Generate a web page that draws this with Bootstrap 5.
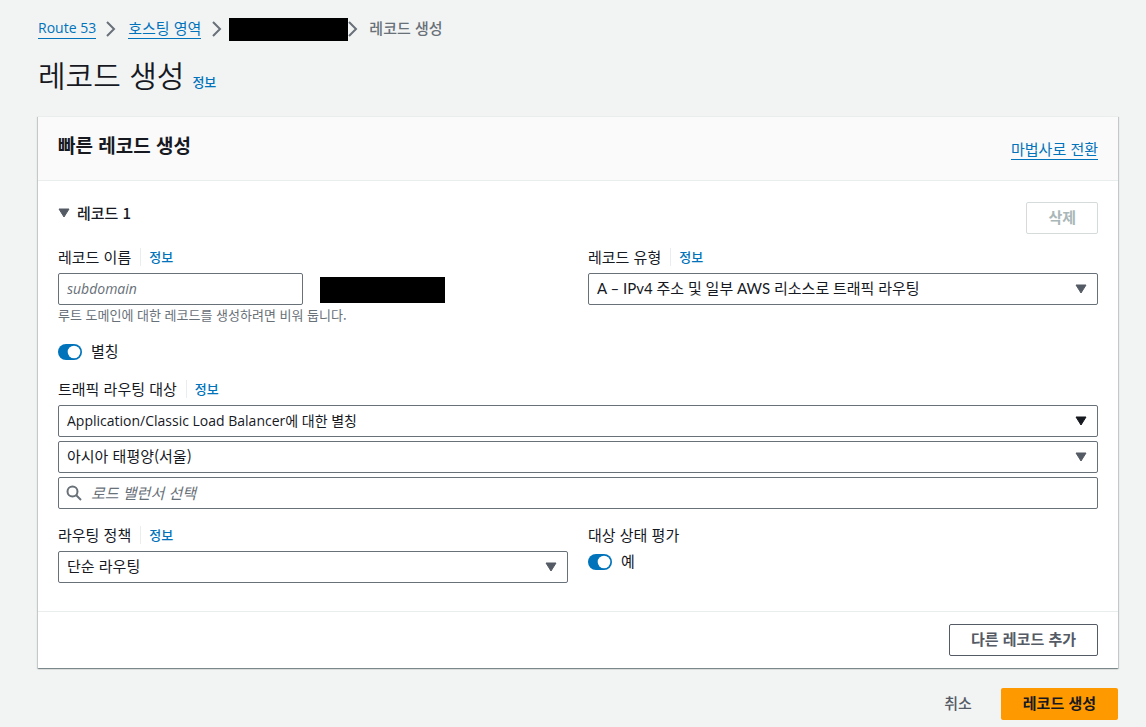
<!DOCTYPE html>
<html lang="ko">
<head>
<meta charset="utf-8">
<meta name="viewport" content="width=device-width, initial-scale=1">
<title>레코드 생성</title>
<link rel="stylesheet" href="https://cdn.jsdelivr.net/npm/bootstrap@5.3.0/dist/css/bootstrap.min.css">
<style>
  :root { --ink: #16191f; --slate: #545b64; --muted: #687078; --blue: #0073bb; --line: #eaeded; }
  body { background: #f2f3f3; color: var(--ink); font-family: "Noto Sans CJK KR", sans-serif; font-size: 15px; line-height: 22px; }
  .latin { font-family: "Open Sans", "Noto Sans CJK KR", sans-serif; font-size: 14px; }
  .page { padding: 16px 28px 7px 38px; }
  a { color: var(--blue); text-decoration: none; }
  .underlined { border-bottom: 1px solid var(--blue); line-height: 20px; }
  .crumbs { gap: 10px; height: 26px; margin-bottom: 12px; }
  .crumbs .underlined, .crumbs .current { margin-bottom: 2px; }
  .crumbs .current { color: var(--muted); font-weight: 500; }
  .redacted { background: #000; }
  .crumb-redacted { width: 119px; height: 23px; margin-right: -11px; margin-left: -4px; }
  .host-redacted { width: 125px; height: 26px; margin-left: 17px; margin-top: 2px; }
  h1 { font-size: 30px; line-height: 40px; font-weight: 350; }
  .info { font-size: 13px; font-weight: 500; }
  .panel { background: #fff; box-shadow: 0 1px 1px 0 rgba(0,28,36,.3), 1px 1px 1px 0 rgba(0,28,36,.15), -1px 1px 1px 0 rgba(0,28,36,.15); border-top: 1px solid var(--line); margin-top: 22px; }
  .panel-head { background: #fafafa; border-bottom: 1px solid var(--line); padding: 14px 20px 20px; }
  h2 { font-size: 19px; line-height: 28px; font-weight: 700; }
  .panel-main { padding: 21px 20px 28px; }
  .panel-foot { border-top: 1px solid var(--line); padding: 12px 20px; }
  .record-head { margin-bottom: 13px; }
  .toggle-record { background: none; border: 0; padding: 0; font-weight: 500; gap: 7px; color: var(--ink); }
  .field-head { margin-bottom: 6px; line-height: 20px; }
  .field-head .info { border-left: 1px solid var(--line); line-height: 18px; margin-left: 9px; padding-left: 8px; }
  .form-control, .form-select { height: 32px; border: 1px solid var(--muted); border-radius: 2px; padding: 0 8px; font-size: 15px; line-height: 22px; color: var(--ink); }
  .form-select { padding: 0 30px 2px 8px; background-image: url("data:image/svg+xml,%3Csvg xmlns='http://www.w3.org/2000/svg' viewBox='0 0 12 10'%3E%3Cpath d='M1 1h10L6 9z' fill='%23545b64' stroke='%23545b64' stroke-linejoin='round'/%3E%3C/svg%3E"); background-size: 12px 10px; background-position: right 10px center; }
  .form-select.active-arrow { background-image: url("data:image/svg+xml,%3Csvg xmlns='http://www.w3.org/2000/svg' viewBox='0 0 12 10'%3E%3Cpath d='M1 1h10L6 9z' fill='%2316191f' stroke='%2316191f' stroke-linejoin='round'/%3E%3C/svg%3E"); }
  .form-control.latin { font-size: 14px; padding-bottom: 2px; }
  .form-select.latin { font-size: 14px; padding-bottom: 0; }
  .form-select.mixed { font-family: Lato, "Noto Sans CJK KR", sans-serif; }
  .form-control::placeholder { color: var(--muted); font-style: italic; opacity: 1; }
  .name-field { width: 245px; }
  .hint { font-size: 13px; line-height: 20px; color: var(--muted); }
  .stack { display: grid; gap: 16px; }
  .row { --bs-gutter-x: 20px; }
  .form-switch { padding: 0; margin: 0; min-height: 22px; gap: 9px; }
  .form-switch label { padding-bottom: 2px; line-height: 20px; }
  .form-switch .form-check-input { width: 24px; height: 16px; margin: 0; float: none; border: 0; background-size: 24px 16px; }
  .form-switch .form-check-input:checked { background-color: var(--blue); background-image: url("data:image/svg+xml,%3Csvg xmlns='http://www.w3.org/2000/svg' viewBox='0 0 24 16'%3E%3Ccircle cx='16' cy='8' r='6.3' fill='%23fff'/%3E%3C/svg%3E"); }
  .search-box svg { position: absolute; left: 8px; top: 8px; }
  .search-box .form-control { padding: 0 8px 2px 32px; }
  .btn { height: 32px; border-radius: 2px; padding: 0 21px 2px; font-size: 15px; line-height: 22px; font-weight: 700; }
  .btn-plain { border: 1px solid var(--slate); color: var(--slate); background: #fff; }
  .btn-plain:disabled { border-color: #d5dbdb; color: #aab7b8; background: #fff; opacity: 1; }
  .btn-text { border: 0; color: var(--slate); font-weight: 500; }
  .btn-create { background: #f90; color: var(--ink); }
  .actions { margin-top: 20px; gap: 8px; }
</style>
</head>
<body>
<main class="page">
  <nav class="crumbs d-flex align-items-center" aria-label="breadcrumb">
    <a href="#" class="underlined latin">Route 53</a>
    <svg width="12" height="16" viewBox="0 0 12 16" fill="none" stroke="#687078" stroke-width="2"><path d="M1 1l7 7-7 7"/></svg>
    <a href="#" class="underlined">호스팅 영역</a>
    <svg width="12" height="16" viewBox="0 0 12 16" fill="none" stroke="#687078" stroke-width="2"><path d="M2 1l7 7-7 7"/></svg>
    <span class="redacted crumb-redacted"></span>
    <svg width="12" height="16" viewBox="0 0 12 16" fill="none" stroke="#687078" stroke-width="2"><path d="M2 1l7 7-7 7"/></svg>
    <span class="current">레코드 생성</span>
  </nav>
  <div class="d-flex align-items-baseline gap-2">
    <h1 class="m-0">레코드 생성</h1>
    <a href="#" class="info">정보</a>
  </div>

  <section class="panel">
    <header class="panel-head d-flex justify-content-between align-items-end">
      <h2 class="m-0 align-self-start">빠른 레코드 생성</h2>
      <a href="#" class="underlined mt-2">마법사로 전환</a>
    </header>

    <form class="panel-main">
      <div class="record-head d-flex justify-content-between align-items-start">
        <button type="button" class="toggle-record d-flex align-items-center">
          <svg width="12" height="10" viewBox="0 0 12 10" fill="#545b64" stroke="#545b64" stroke-linejoin="round"><path d="M1 1h10L6 9z"/></svg>
          레코드 1
        </button>
        <button type="button" class="btn btn-plain" disabled>삭제</button>
      </div>

      <div class="stack">
        <div class="row">
          <div class="col-6">
            <div class="field-head d-flex align-items-center">
              <label for="name">레코드 이름</label><a href="#" class="info">정보</a>
            </div>
            <div class="d-flex align-items-center">
              <input id="name" type="text" class="form-control latin name-field" placeholder="subdomain">
              <span class="redacted host-redacted"></span>
            </div>
            <div class="hint">루트 도메인에 대한 레코드를 생성하려면 비워 둡니다.</div>
          </div>
          <div class="col-6">
            <div class="field-head d-flex align-items-center">
              <label for="type">레코드 유형</label><a href="#" class="info">정보</a>
            </div>
            <select id="type" class="form-select mixed"><option>A – IPv4 주소 및 일부 AWS 리소스로 트래픽 라우팅</option></select>
          </div>
        </div>

        <div class="form-check form-switch d-flex align-items-center">
          <input id="alias" class="form-check-input" type="checkbox" role="switch" checked>
          <label for="alias">별칭</label>
        </div>

        <div>
          <div class="field-head d-flex align-items-center">
            <label for="target">트래픽 라우팅 대상</label><a href="#" class="info">정보</a>
          </div>
          <div class="d-grid gap-1">
            <select id="target" class="form-select latin active-arrow"><option>Application/Classic Load Balancer에 대한 별칭</option></select>
            <select class="form-select" aria-label="리전"><option>아시아 태평양(서울)</option></select>
            <div class="search-box position-relative">
              <svg width="16" height="16" viewBox="0 0 16 16" fill="none" stroke="#687078" stroke-width="2"><circle cx="6.5" cy="6.5" r="5"/><path d="M10 10l5 5"/></svg>
              <input type="search" class="form-control" aria-label="로드 밸런서 선택" placeholder="로드 밸런서 선택">
            </div>
          </div>
        </div>

        <div class="row">
          <div class="col-6">
            <div class="field-head d-flex align-items-center">
              <label for="policy">라우팅 정책</label><a href="#" class="info">정보</a>
            </div>
            <select id="policy" class="form-select"><option>단순 라우팅</option></select>
          </div>
          <div class="col-6">
            <div class="field-head">대상 상태 평가</div>
            <div class="form-check form-switch d-flex align-items-center">
              <input id="health" class="form-check-input" type="checkbox" role="switch" checked>
              <label for="health">예</label>
            </div>
          </div>
        </div>
      </div>
    </form>

    <footer class="panel-foot d-flex justify-content-end">
      <button type="button" class="btn btn-plain">다른 레코드 추가</button>
    </footer>
  </section>

  <div class="actions d-flex justify-content-end">
    <button type="button" class="btn btn-text">취소</button>
    <button type="submit" class="btn btn-create">레코드 생성</button>
  </div>
</main>
<script src="https://cdn.jsdelivr.net/npm/bootstrap@5.3.0/dist/js/bootstrap.bundle.min.js"></script>
</body>
</html>
